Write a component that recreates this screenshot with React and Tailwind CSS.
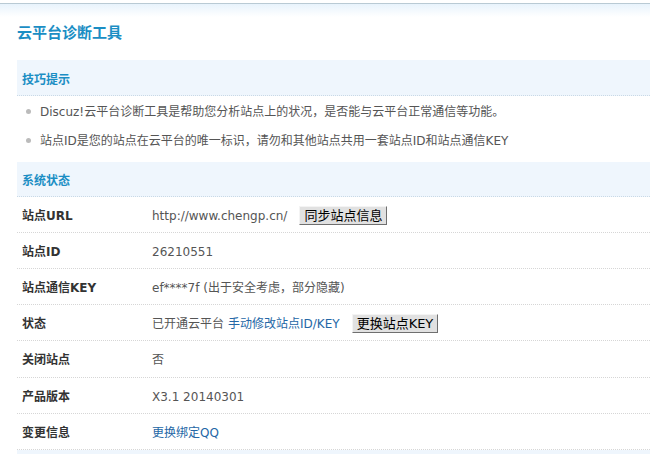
export default function App() {
    const btn =
        'ml-[12px] h-[19px] px-[4px] bg-[#e1e1e1] border border-t-[#f4f4f4] border-l-[#f4f4f4] border-r-[#6f6f6f] border-b-[#6f6f6f] text-[13px] leading-[16px] font-normal text-black';

    const rows = [
        {
            label: '站点URL',
            value: (
                <>
                    <span>http://www.chengp.cn/</span>
                    <button className={btn}>同步站点信息</button>
                </>
            ),
        },
        { label: '站点ID', value: <span>26210551</span> },
        { label: '站点通信KEY', value: <span>ef****7f (出于安全考虑，部分隐藏)</span> },
        {
            label: '状态',
            value: (
                <>
                    <span>已开通云平台</span>
                    <a className="ml-[4px] text-[#2467a6]">手动修改站点ID/KEY</a>
                    <button className={btn}>更换站点KEY</button>
                </>
            ),
        },
        { label: '关闭站点', value: <span>否</span>, tall: true },
        { label: '产品版本', value: <span>X3.1 20140301</span> },
        { label: '变更信息', value: <a className="text-[#2467a6]">更换绑定QQ</a> },
    ];

    return (
        <div
            className="w-[650px] h-[454px] overflow-hidden bg-white text-[12px] text-[#555]"
            style={{ fontFamily: '"DejaVu Sans", "Noto Sans CJK SC", sans-serif' }}
        >
            {/* top bar */}
            <div className="h-[3px] bg-white" />
            <div className="h-[14px] border-t border-[#b9cad4] bg-gradient-to-b from-[#e8f3fc] to-white" />

            {/* title */}
            <div className="pl-[17px] pt-[6px] h-[43px]">
                <h1 className="text-[15px] font-bold leading-[20px] text-[#1b8ec4]">云平台诊断工具</h1>
            </div>

            <div className="pl-[17px]">
                {/* tips */}
                <div className="h-[36px] flex items-center pt-[4px] pl-[5px] bg-[#eff6fd] border-b border-dotted border-[#c9d9e6] font-bold text-[#1b8ec4]">
                    技巧提示
                </div>
                <ul className="pl-[9px] pt-[1px]">
                    <li className="flex items-center h-[29px]">
                        <span className="w-[5px] h-[5px] rounded-full bg-[#bbb] mr-[9px]" />
                        Discuz!云平台诊断工具是帮助您分析站点上的状况，是否能与云平台正常通信等功能。
                    </li>
                    <li className="flex items-center h-[29px]">
                        <span className="w-[5px] h-[5px] rounded-full bg-[#bbb] mr-[9px]" />
                        站点ID是您的站点在云平台的唯一标识，请勿和其他站点共用一套站点ID和站点通信KEY
                    </li>
                </ul>

                {/* system status */}
                <div className="mt-[7px] h-[35px] flex items-center pt-[4px] pl-[5px] bg-[#eff6fd] border-b border-dotted border-[#c9d9e6] font-bold text-[#1b8ec4]">
                    系统状态
                </div>
                {rows.map((row) => (
                    <div
                        key={row.label}
                        className={`${row.tall ? 'h-[37px]' : 'h-[36px]'} flex items-center pt-[2px] border-b border-dotted border-[#d6d6d6]`}
                    >
                        <div className="w-[135px] pl-[5px] font-bold text-[#333]">{row.label}</div>
                        <div className="flex items-center">{row.value}</div>
                    </div>
                ))}
                <div className="h-[10px] bg-[#eff6fd]" />
            </div>
        </div>
    );
}
